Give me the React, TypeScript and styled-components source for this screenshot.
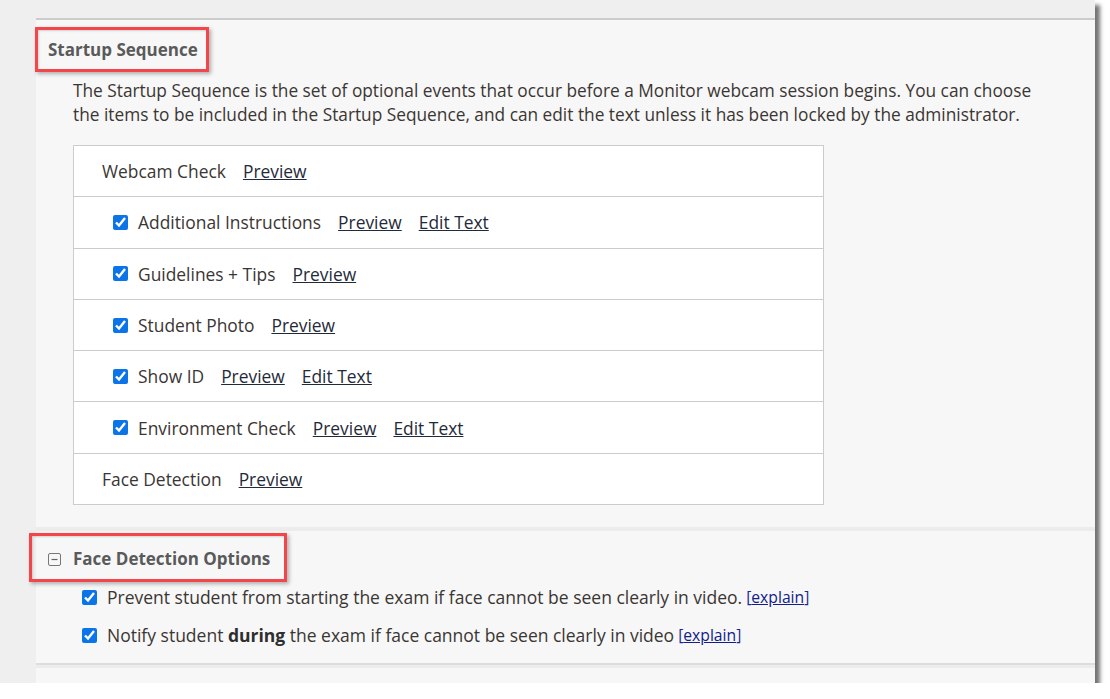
import React from 'react'
import styled, { createGlobalStyle } from 'styled-components'

const GlobalStyle = createGlobalStyle`
    body {
        margin: 0;
        background: #ffffff;
        font-family: "Open Sans", "Liberation Sans", sans-serif;
    }
`

interface IStep {
    label: string
    checkbox?: boolean
    editable?: boolean
}

const steps: IStep[] = [
    { label: 'Webcam Check' },
    { label: 'Additional Instructions', checkbox: true, editable: true },
    { label: 'Guidelines + Tips', checkbox: true },
    { label: 'Student Photo', checkbox: true },
    { label: 'Show ID', checkbox: true, editable: true },
    { label: 'Environment Check', checkbox: true, editable: true },
    { label: 'Face Detection' },
]

const App: React.FC = () => {
    return (
        <>
            <GlobalStyle />
            <Shot>
                <Panel>
                    <SequenceSection>
                        <SectionTitle>
                            Startup Sequence
                            <Callout style={{ left: -13, top: -11, width: 174, height: 45 }} />
                        </SectionTitle>
                        <Description>
                            The Startup Sequence is the set of optional events that occur before a Monitor webcam session begins. You can choose
                            the items to be included in the Startup Sequence, and can edit the text unless it has been locked by the administrator.
                        </Description>
                        <StepTable>
                            {steps.map((step) => (
                                <StepRow key={step.label} $checkbox={step.checkbox}>
                                    {step.checkbox && <Check type="checkbox" defaultChecked />}
                                    <StepLabel>{step.label}</StepLabel>
                                    <StepLink href="#">Preview</StepLink>
                                    {step.editable && <StepLink href="#">Edit Text</StepLink>}
                                </StepRow>
                            ))}
                        </StepTable>
                    </SequenceSection>
                    <OptionsSection>
                        <OptionsHeader>
                            <Collapse viewBox="0 0 13 13">
                                <rect x="0.5" y="0.5" width="12" height="12" rx="1.5" fill="none" stroke="#777" />
                                <path d="M3.5 6.5h6" stroke="#666" strokeWidth="1.2" />
                            </Collapse>
                            <OptionsTitle>Face Detection Options</OptionsTitle>
                            <Callout style={{ left: -19, top: -14, width: 258, height: 49 }} />
                        </OptionsHeader>
                        <Option>
                            <OptionCheck type="checkbox" defaultChecked />
                            <span>Prevent student from starting the exam if face cannot be seen clearly in video.</span>
                            <Explain>[<a href="#">explain</a>]</Explain>
                        </Option>
                        <Option>
                            <OptionCheck type="checkbox" defaultChecked />
                            <span>Notify student <b>during</b> the exam if face cannot be seen clearly in video</span>
                            <Explain>[<a href="#">explain</a>]</Explain>
                        </Option>
                    </OptionsSection>
                    <Footer />
                </Panel>
            </Shot>
        </>
    )
}

const Shot = styled.div`
    width: 1095px;
    height: 683px;
    box-sizing: border-box;
    padding: 18px 0 0 36px;
    background: #efefef;
    display: flex;
    box-shadow: 5px 5px 4px rgba(0, 0, 0, 0.55);
`

const Panel = styled.div`
    flex: 1;
    display: flex;
    flex-direction: column;
    border-top: 2px solid #cccccc;
    background: #f7f7f7;
    color: #3a3633;
`

const SequenceSection = styled.section`
    padding: 18px 0 22px 12px;
`

const SectionTitle = styled.h2`
    position: relative;
    display: inline-block;
    margin: 0;
    font-size: 17px;
    line-height: 24px;
    font-weight: 700;
    color: #5a5a5a;
`

const Callout = styled.div`
    position: absolute;
    box-sizing: border-box;
    border: 3px solid #f2464b;
    box-shadow: 2px 2px 4px rgba(0, 0, 0, 0.3), inset 1px 1px 2px rgba(0, 0, 0, 0.15);
    pointer-events: none;
`

const Description = styled.p`
    margin: 17px 0 0 25px;
    width: 978px;
    font-size: 17.3px;
    line-height: 24px;
`

const StepTable = styled.div`
    margin: 18px 0 0 25px;
    width: 749px;
    border: 1px solid #cccccc;
    background: #ffffff;
`

const StepRow = styled.div<{ $checkbox?: boolean }>`
    display: flex;
    align-items: center;
    gap: 17px;
    height: 50.3px;
    padding-left: ${(p) => (p.$checkbox ? '39px' : '28px')};
    font-size: 17.4px;

    & + & {
        border-top: 1px solid #cccccc;
    }
`

const Check = styled.input`
    width: 15px;
    height: 15px;
    margin: 0 -7px 0 0;
    accent-color: #0b74e8;
`

const StepLabel = styled.span`
    color: #3a3633;
`

const StepLink = styled.a`
    color: #1f2b3a;
    text-decoration: underline;
`

const OptionsSection = styled.section`
    border-top: 4px solid #ececec;
    padding: 16px 0 9px 12px;
    border-bottom: 2px solid #dddddd;
`

const OptionsHeader = styled.div`
    position: relative;
    display: inline-flex;
    align-items: center;
    gap: 12px;
    height: 24px;
`

const Collapse = styled.svg`
    width: 13px;
    height: 13px;
`

const OptionsTitle = styled.h3`
    margin: 0;
    font-size: 17px;
    line-height: 24px;
    font-weight: 700;
    color: #5a5a5a;
`

const Option = styled.label`
    display: flex;
    align-items: center;
    height: 38px;
    padding-left: 34px;
    font-size: 17.5px;
    white-space: nowrap;

    &:first-of-type {
        margin-top: 7px;
    }

    b {
        font-weight: 700;
        color: #2e2e2e;
    }
`

const OptionCheck = styled.input`
    width: 15px;
    height: 15px;
    margin: 0 10px 0 0;
    accent-color: #0b74e8;
`

const Explain = styled.span`
    margin-left: 4px;
    font-size: 15.7px;
    color: #1a2a9a;

    a {
        color: #10208a;
    }
`

const Footer = styled.div`
    flex: 1;
    border-top: 3px solid #ececec;
`

export default App
